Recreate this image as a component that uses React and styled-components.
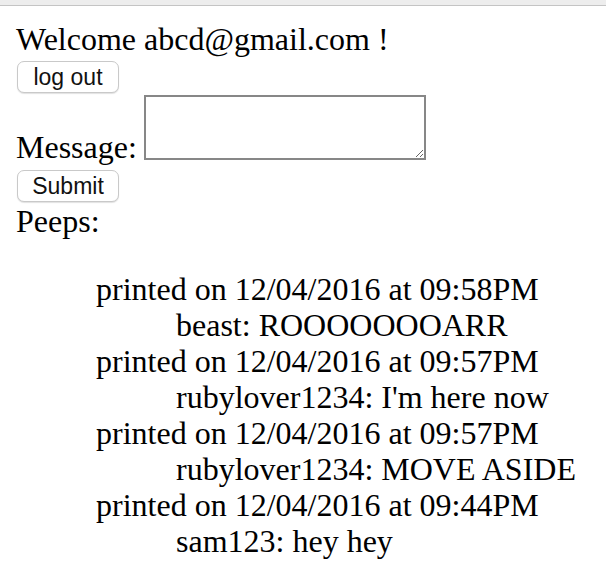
import React from "react";
import styled, { createGlobalStyle } from "styled-components";

const GlobalStyle = createGlobalStyle`
  body {
    margin: 0;
    background-color: #ffffff;
    font-family: "Liberation Serif", "Times New Roman", serif;
    font-size: 32px;
    color: #000000;
  }
`;

const TopBar = styled.div`
  height: 5px;
  background-color: #ededed;
  border-bottom: 1px solid #c4c4c4;
`;

const Page = styled.div`
  padding: 15px 16px 0 16px;
  line-height: 36px;
`;

const Line = styled.div`
  white-space: nowrap;
  margin-top: ${(props) => props.$top || "0"};
`;

const Button = styled.button`
  display: block;
  box-sizing: border-box;
  width: 102px;
  height: 32px;
  margin: ${(props) => props.$top || "4px"} 0 0 1px;
  padding: 0;
  background-color: #ffffff;
  border: 1px solid #c9c9c9;
  border-radius: 7px;
  box-shadow: 0 1px 1px rgba(0, 0, 0, 0.12);
  font-family: "Liberation Sans", Arial, sans-serif;
  font-size: 23px;
  line-height: 30px;
  color: #111111;
  cursor: pointer;
`;

const MessageRow = styled.div`
  display: flex;
  align-items: flex-end;
  margin-top: 2px;
`;

const Label = styled.span`
  margin-right: 7px;
  margin-bottom: -5.2px;
`;

const TextArea = styled.textarea`
  box-sizing: border-box;
  width: 282px;
  height: 65px;
  margin: 0;
  border: 2px solid #878787;
  padding: 2px;
  background-color: #ffffff;
  font-family: "Liberation Mono", monospace;
  font-size: 20px;
  resize: both;
  outline: none;
`;

const PeepList = styled.div`
  margin: 32px 0 0 80px;
`;

const Message = styled.div`
  margin-left: 80px;
  white-space: nowrap;
`;

const peeps = [
  { time: "12/04/2016 at 09:58PM", user: "beast", text: "ROOOOOOOARR" },
  { time: "12/04/2016 at 09:57PM", user: "rubylover1234", text: "I'm here now" },
  { time: "12/04/2016 at 09:57PM", user: "rubylover1234", text: "MOVE ASIDE" },
  { time: "12/04/2016 at 09:44PM", user: "sam123", text: "hey hey" }
];

const App = () => {
  const [message, setMessage] = React.useState("");

  return (
    <>
      <GlobalStyle />
      <TopBar />
      <Page>
        <Line>Welcome abcd@gmail.com !</Line>
        <Button>log out</Button>
        <MessageRow>
          <Label>Message:</Label>
          <TextArea value={message} onChange={(e) => setMessage(e.target.value)} />
        </MessageRow>
        <Button $top="10px">Submit</Button>
        <Line $top="1px">Peeps:</Line>
        <PeepList>
          {peeps.map((peep, i) => (
            <React.Fragment key={i}>
              <Line>printed on {peep.time}</Line>
              <Message>
                {peep.user}: {peep.text}
              </Message>
            </React.Fragment>
          ))}
        </PeepList>
      </Page>
    </>
  );
};

export default App;
